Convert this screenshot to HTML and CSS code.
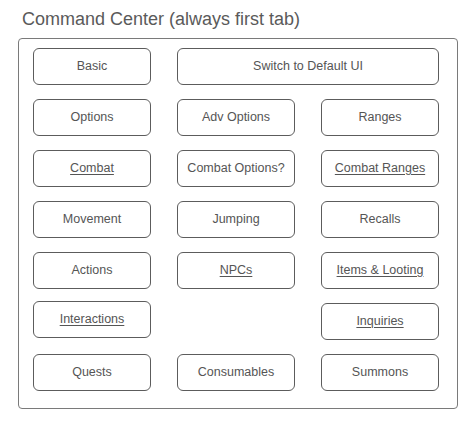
FILE: index.html
```html
<!DOCTYPE html>
<html>
<head>
<meta charset="utf-8">
<link rel="stylesheet" href="styles.css">
</head>
<body>
<h1 class="title">Command Center (always first tab)</h1>
<div class="panel">
  <div class="grid">
    <div class="btn">Basic</div>
    <div class="btn wide">Switch to Default UI</div>
    <div class="btn">Options</div>
    <div class="btn">Adv Options</div>
    <div class="btn">Ranges</div>
    <div class="btn"><u>Combat</u></div>
    <div class="btn">Combat Options?</div>
    <div class="btn"><u>Combat Ranges</u></div>
    <div class="btn">Movement</div>
    <div class="btn">Jumping</div>
    <div class="btn">Recalls</div>
    <div class="btn">Actions</div>
    <div class="btn"><u>NPCs</u></div>
    <div class="btn"><u>Items &amp; Looting</u></div>
    <div class="btn up"><u>Interactions</u></div>
    <div class="empty"></div>
    <div class="btn"><u>Inquiries</u></div>
    <div class="btn">Quests</div>
    <div class="btn">Consumables</div>
    <div class="btn">Summons</div>
  </div>
</div>
</body>
</html>
```
FILE: styles.css
```css
html, body {
  margin: 0;
  padding: 0;
  background: #ffffff;
}
body {
  font-family: "Liberation Sans", Arial, sans-serif;
  width: 476px;
  height: 426px;
  overflow: hidden;
}
.title {
  margin: 0;
  padding: 9px 0 0 22px;
  font-size: 18px;
  font-weight: normal;
  line-height: 21px;
  color: #5a5a5a;
}
.panel {
  margin: 8px 0 0 18px;
  width: 424px;
  height: 360px;
  border: 1px solid #7a7a7a;
  border-radius: 4px;
  padding: 9px 0 0 14px;
  box-sizing: content-box;
}
.grid {
  display: grid;
  grid-template-columns: 118px 118px 118px;
  grid-auto-rows: 36px;
  column-gap: 26px;
  row-gap: 15px;
}
.btn {
  border: 1px solid #5c5c5c;
  border-radius: 6px;
  display: flex;
  align-items: center;
  justify-content: center;
  font-size: 12.5px;
  color: #555555;
  box-sizing: border-box;
  height: 37px;
  padding-bottom: 2px;
}
.btn u {
  text-decoration-thickness: 1px;
  text-underline-offset: 2px;
}
.wide {
  grid-column: span 2;
}
.up {
  margin-top: -2px;
}
```
